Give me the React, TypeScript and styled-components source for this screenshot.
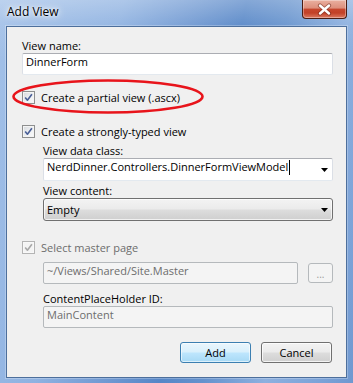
import React from "react";
import styled, { createGlobalStyle } from "styled-components";

const GlobalStyle = createGlobalStyle`
  html, body { margin: 0; padding: 0; width: 353px; height: 383px; overflow: hidden; background: #6f97cf; }
  #root { width: 353px; height: 383px; }
  * { box-sizing: border-box; }
`;

const Window = styled.div`
  position: relative;
  width: 353px;
  height: 383px;
  display: flex;
  flex-direction: column;
  font-family: "Open Sans", "Noto Sans", sans-serif;
  font-size: 11px;
  color: #000;
  background:
    linear-gradient(180deg, rgba(255, 255, 255, 0.28) 0px, rgba(255, 255, 255, 0.08) 24px, rgba(255, 255, 255, 0) 60px),
    linear-gradient(103deg, #a3c1e8 0%, #8fb2e1 28%, #7099d2 44%, #5686c7 56%, #6592cd 66%, #8db0df 80%, #7ca3d8 92%, #6f98d0 100%);
`;

const TitleBar = styled.div`
  height: 26px;
  flex: none;
  display: flex;
  justify-content: space-between;
  align-items: flex-start;
  padding: 0 6px 0 7px;
`;

const Title = styled.div`
  font-size: 12px;
  line-height: 16px;
  padding-top: 4px;
  color: #000;
  text-shadow: 0 0 3px #fff, 0 0 7px rgba(255, 255, 255, 0.95), 0 0 12px rgba(255, 255, 255, 0.7);
`;

const CloseButton = styled.div`
  width: 45px;
  height: 19px;
  display: flex;
  align-items: center;
  justify-content: center;
  border: 1px solid #4a1d14;
  border-top: none;
  border-radius: 0 0 4px 4px;
  background: linear-gradient(180deg, #eab0a0 0%, #dd8f7c 44%, #c6462d 52%, #c24128 72%, #dc7a62 100%);
  box-shadow: inset 0 0 0 1px rgba(255, 255, 255, 0.35);
`;

const Client = styled.div`
  flex: 1;
  margin: 0 6px 5px 6px;
  background: #f0f0f0;
  border: 1px solid #4d6f9c;
  box-shadow: 0 0 0 1px rgba(255, 255, 255, 0.25);
  padding: 11px 13px 0 15px;
  display: flex;
  flex-direction: column;
`;

const FieldLabel = styled.div<{ $mt?: number; $disabled?: boolean }>`
  line-height: 15px;
  height: 15px;
  margin-top: ${(p) => p.$mt ?? 0}px;
  color: ${(p) => (p.$disabled ? "#6d6d6d" : "#000")};
  white-space: nowrap;
`;

const TextField = styled.div<{ $mt?: number; $disabled?: boolean }>`
  height: 22px;
  margin-top: ${(p) => p.$mt ?? 0}px;
  flex: 1;
  border: 1px solid ${(p) => (p.$disabled ? "#b5b9bc" : "#abadb3")};
  border-left-color: ${(p) => (p.$disabled ? "#b5b9bc" : "#dbdfe6")};
  border-right-color: ${(p) => (p.$disabled ? "#b5b9bc" : "#dbdfe6")};
  border-bottom-color: ${(p) => (p.$disabled ? "#b5b9bc" : "#e3e9ef")};
  border-radius: 2px;
  background: ${(p) => (p.$disabled ? "#f4f4f4" : "#fff")};
  color: ${(p) => (p.$disabled ? "#6d6d6d" : "#000")};
  padding: 0 3px;
  line-height: 16px;
  white-space: nowrap;
  overflow: hidden;
`;

const ComboField = styled.div`
  height: 23px;
  display: flex;
  align-items: flex-start;
  justify-content: space-between;
  border: 1px solid #abadb3;
  border-left-color: #dbdfe6;
  border-right-color: #dbdfe6;
  border-bottom-color: #e3e9ef;
  border-radius: 2px;
  background: #fff;
  padding: 0 4px 0 3px;
  line-height: 16px;
  white-space: nowrap;
`;

const ComboText = styled.span`
  display: inline-flex;
  align-items: center;
  height: 16px;
`;

const Caret = styled.span`
  display: inline-block;
  width: 1px;
  height: 15px;
  margin-left: 1px;
  background: #000;
`;

const ArrowBox = styled.span<{ $top: number }>`
  display: flex;
  padding-top: ${(p) => p.$top}px;
  width: 7px;
`;

const SelectField = styled.div`
  height: 23px;
  display: flex;
  align-items: flex-start;
  justify-content: space-between;
  border: 1px solid #707070;
  border-radius: 3px;
  background: linear-gradient(180deg, #f3f3f3 0%, #ebebeb 48%, #dddddd 52%, #cfcfcf 100%);
  box-shadow: inset 0 0 0 1px rgba(255, 255, 255, 0.7);
  padding: 0 4px 0 3px;
  line-height: 21px;
`;

const CheckRow = styled.div<{ $mt?: number; $disabled?: boolean }>`
  display: flex;
  align-items: center;
  height: 15px;
  line-height: 15px;
  margin-top: ${(p) => p.$mt ?? 0}px;
  gap: 6px;
  color: ${(p) => (p.$disabled ? "#6d6d6d" : "#000")};
  white-space: nowrap;
`;

const CheckBox = styled.span<{ $disabled?: boolean }>`
  width: 13px;
  height: 13px;
  flex: none;
  display: flex;
  align-items: center;
  justify-content: center;
  border: 1px solid ${(p) => (p.$disabled ? "#b4b4b4" : "#8e8f8f")};
  background: ${(p) =>
    p.$disabled ? "#f4f4f4" : "linear-gradient(135deg, #d6d9dd 0%, #eef0f2 55%, #fbfbfb 100%)"};
  box-shadow: inset 0 0 0 1px ${(p) => (p.$disabled ? "#f8f8f8" : "#f4f4f4")};
`;

const Indent = styled.div`
  display: flex;
  flex-direction: column;
  margin-left: 21px;
`;

const FieldRow = styled.div<{ $mt?: number }>`
  display: flex;
  align-items: center;
  gap: 10px;
  margin-top: ${(p) => p.$mt ?? 0}px;
`;

const BrowseButton = styled.div`
  width: 25px;
  height: 20px;
  flex: none;
  border: 1px solid #b5b9bc;
  border-radius: 3px;
  background: #f4f4f4;
  color: #9a9a9a;
  display: flex;
  align-items: center;
  justify-content: center;
  line-height: 15px;
  padding-top: 2px;
  font-size: 10px;
`;

const ButtonBar = styled.div`
  display: flex;
  justify-content: flex-end;
  gap: 10px;
  margin-top: 14px;
  padding-right: 1px;
`;

const PushButton = styled.div<{ $default?: boolean }>`
  width: 71px;
  height: 21px;
  display: flex;
  align-items: center;
  justify-content: center;
  border: 1px solid ${(p) => (p.$default ? "#3c7fb1" : "#707070")};
  border-radius: 3px;
  background: ${(p) =>
    p.$default
      ? "linear-gradient(180deg, #eaf6fd 0%, #d9f0fc 48%, #bee6fd 52%, #a7d9f5 100%)"
      : "linear-gradient(180deg, #f3f3f3 0%, #ebebeb 48%, #dddddd 52%, #cfcfcf 100%)"};
  box-shadow: inset 0 0 0 1px ${(p) => (p.$default ? "rgba(255,255,255,0.6)" : "rgba(255,255,255,0.75)")};
  line-height: 15px;
`;

const Annotation = styled.svg`
  position: absolute;
  left: 11px;
  top: 78px;
  pointer-events: none;
`;

const Check = ({ disabled }: { disabled?: boolean }) => (
  <svg width="9" height="9" viewBox="0 0 9 9">
    <path
      d="M1.2 4.6 L3.4 7.2 L7.9 1.2"
      fill="none"
      stroke={disabled ? "#a8a8a8" : "#4a5f97"}
      strokeWidth="1.6"
      strokeLinejoin="round"
    />
  </svg>
);

const Arrow = () => (
  <svg width="7" height="4" viewBox="0 0 7 4">
    <path d="M0 0 H7 L3.5 4 Z" fill="#000" />
  </svg>
);

const CloseGlyph = () => (
  <svg width="15" height="13" viewBox="0 0 15 13">
    <path d="M3 2.5 L12 10.5 M12 2.5 L3 10.5" stroke="#6a2418" strokeOpacity="0.55" strokeWidth="4.2" strokeLinecap="round" />
    <path d="M3 2.5 L12 10.5 M12 2.5 L3 10.5" stroke="#fff" strokeWidth="2.4" strokeLinecap="round" />
  </svg>
);

export default function App() {
  return (
    <>
      <GlobalStyle />
      <Window>
        <TitleBar>
          <Title>Add View</Title>
          <CloseButton>
            <CloseGlyph />
          </CloseButton>
        </TitleBar>
        <Client>
          <FieldLabel>View name:</FieldLabel>
          <TextField $mt={0} style={{ flex: "none" }}>DinnerForm</TextField>

          <CheckRow $mt={15}>
            <CheckBox>
              <Check />
            </CheckBox>
            Create a partial view (.ascx)
          </CheckRow>

          <CheckRow $mt={19}>
            <CheckBox>
              <Check />
            </CheckBox>
            Create a strongly-typed view
          </CheckRow>

          <Indent>
            <FieldLabel $mt={4}>View data class:</FieldLabel>
            <ComboField>
              <ComboText>
                NerdDinner.Controllers.DinnerFormViewModel
                <Caret />
              </ComboText>
              <ArrowBox $top={9}>
                <Arrow />
              </ArrowBox>
            </ComboField>
            <FieldLabel $mt={2}>View content:</FieldLabel>
            <SelectField>
              <span>Empty</span>
              <ArrowBox $top={9}>
                <Arrow />
              </ArrowBox>
            </SelectField>
          </Indent>

          <CheckRow $mt={19} $disabled>
            <CheckBox $disabled>
              <Check disabled />
            </CheckBox>
            Select master page
          </CheckRow>

          <Indent>
            <FieldRow $mt={7}>
              <TextField $disabled>~/Views/Shared/Site.Master</TextField>
              <BrowseButton>...</BrowseButton>
            </FieldRow>
            <FieldLabel $mt={7}>ContentPlaceHolder ID:</FieldLabel>
            <TextField $disabled style={{ flex: "none" }}>MainContent</TextField>
          </Indent>

          <ButtonBar>
            <PushButton $default>Add</PushButton>
            <PushButton>Cancel</PushButton>
          </ButtonBar>
        </Client>
        <Annotation width="195" height="37" viewBox="0 0 195 37">
          <ellipse cx="97" cy="18.5" rx="94.5" ry="16" fill="none" stroke="#e8141b" strokeWidth="2.6" />
        </Annotation>
      </Window>
    </>
  );
}
